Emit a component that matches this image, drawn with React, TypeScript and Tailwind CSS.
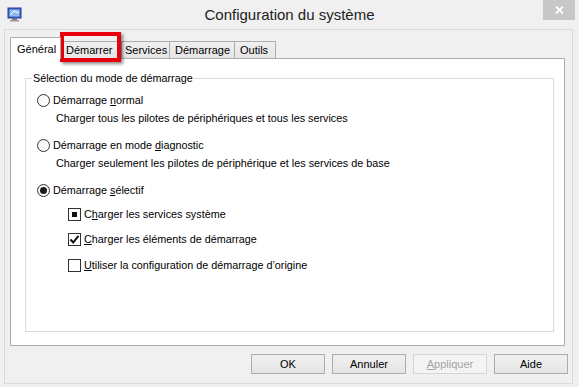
import React from "react";

const F = { fontFamily: '"Liberation Sans", Arial, sans-serif' };

function Radio({ checked }: { checked?: boolean }) {
  return (
    <span className="w-[13px] h-[13px] rounded-full border border-[#333333] bg-gradient-to-br from-[#f4f4f4] to-white flex items-center justify-center shrink-0">
      {checked && <span className="w-[7px] h-[7px] rounded-full bg-[#1a1a1a]" />}
    </span>
  );
}

function Check({ state }: { state: "none" | "check" | "ind" }) {
  return (
    <span className="w-[13px] h-[13px] border border-[#333333] bg-white flex items-center justify-center shrink-0">
      {state === "ind" && <span className="w-[5px] h-[5px] bg-[#111]" />}
      {state === "check" && (
        <svg width="11" height="11" viewBox="0 0 11 11">
          <path d="M1.5 5.5 L4.2 8.5 L9.5 1.8" fill="none" stroke="#111" strokeWidth="2" />
        </svg>
      )}
    </span>
  );
}

function Btn({ children, disabled }: { children: React.ReactNode; disabled?: boolean }) {
  return (
    <div
      className={
        "w-[74px] h-[20px] flex items-center justify-center text-[11px] border " +
        (disabled
          ? "border-[#d6d6d6] bg-[#f4f4f4] text-[#a3a3a3]"
          : "border-[#acacac] bg-gradient-to-b from-[#f0f0f0] to-[#e5e5e5] text-black")
      }
    >
      {children}
    </div>
  );
}

export default function App() {
  return (
    <div className="w-[579px] h-[387px] bg-[#f0f0f0] relative overflow-hidden text-black" style={F}>
      {/* Title bar */}
      <div className="h-[29px] flex items-center relative">
        <svg className="absolute left-[7px] top-[7px]" width="15" height="15" viewBox="0 0 15 15">
          <rect x="1" y="1" width="13" height="10" fill="#3a64c8" stroke="#1d3d8f" strokeWidth="1" />
          <rect x="2.5" y="2.5" width="10" height="7" fill="#8fb8f0" />
          <path d="M3 8 L7 4 L12 6" stroke="#ffffff" strokeWidth="1" fill="none" />
          <rect x="5" y="11" width="5" height="2" fill="#7a7a7a" />
          <rect x="3" y="13" width="9" height="1.5" fill="#9a9a9a" />
        </svg>
        <div className="flex-1 text-center text-[15px] text-[#222] pt-[1px]">Configuration du système</div>
        <div className="absolute top-0 right-[4px] w-[32px] h-[20px] bg-[#c7c7c7] flex items-center justify-center">
          <svg width="9" height="8" viewBox="0 0 9 8">
            <path d="M1 0.5 L8 7.5 M8 0.5 L1 7.5" stroke="#fff" strokeWidth="1.8" />
          </svg>
        </div>
      </div>

      {/* Client frame */}
      <div className="ml-[4px] w-[569px] h-[355px] border border-[#dadada] flex flex-col">
        {/* Tabs */}
        <div className="h-[28px] flex items-end pl-[5px] text-[11px]">
          <div className="h-[22px] w-[51px] bg-white border border-[#adadad] border-b-0 pl-[6px] pt-[3px] relative z-10 -mb-[1px]">
            Général
          </div>
          <div className="h-[17px] w-[60px] bg-gradient-to-b from-[#f0f0f0] to-[#e5e5e5] border border-[#acacac] border-b-0 border-l-0 pl-[5px] leading-[16px]">
            Démarrer
          </div>
          <div className="h-[17px] w-[49px] bg-gradient-to-b from-[#f0f0f0] to-[#e5e5e5] border border-[#acacac] border-b-0 pl-[3px] leading-[16px]">
            Services
          </div>
          <div className="h-[17px] w-[65px] bg-gradient-to-b from-[#f0f0f0] to-[#e5e5e5] border border-[#acacac] border-b-0 border-l-0 pl-[5px] leading-[16px]">
            Démarrage
          </div>
          <div className="h-[17px] w-[41px] bg-gradient-to-b from-[#f0f0f0] to-[#e5e5e5] border border-[#acacac] border-b-0 border-l-0 pl-[5px] leading-[16px]">
            Outils
          </div>
        </div>

        {/* Panel */}
        <div className="ml-[5px] w-[555px] h-[288px] bg-white border border-[#adadad] pt-[19px] pl-[14px] pr-[10px]">
          <div className="relative h-[254px] border border-[#dcdcdc] text-[10.8px]">
            <span className="absolute -top-[9px] left-[6px] bg-white px-[1px] leading-[16px]">
              Sélection du mode de démarrage
            </span>
            <div className="pl-[11px] pt-[15px] flex flex-col">
              <div className="h-[13px] flex items-center gap-[3px]">
                <Radio />
                <span>
                  Démarrage <u>n</u>ormal
                </span>
              </div>
              <div className="h-[13px] mt-[5px] pl-[19px] flex items-center">
                Charger tous les pilotes de périphériques et tous les services
              </div>
              <div className="h-[13px] mt-[14px] flex items-center gap-[3px]">
                <Radio />
                <span>
                  Démarrage en mode <u>d</u>iagnostic
                </span>
              </div>
              <div className="h-[13px] mt-[5px] pl-[19px] flex items-center">
                Charger seulement les pilotes de périphérique et les services de base
              </div>
              <div className="h-[13px] mt-[14px] flex items-center gap-[3px]">
                <Radio checked />
                <span>
                  Démarrage <u>s</u>électif
                </span>
              </div>
              <div className="h-[13px] mt-[11px] pl-[31px] flex items-center gap-[3px]">
                <Check state="ind" />
                <span>
                  C<u>h</u>arger les services système
                </span>
              </div>
              <div className="h-[13px] mt-[12px] pl-[31px] flex items-center gap-[3px]">
                <Check state="check" />
                <span>
                  <u>C</u>harger les éléments de démarrage
                </span>
              </div>
              <div className="h-[13px] mt-[13px] pl-[31px] flex items-center gap-[3px]">
                <Check state="none" />
                <span>
                  <u>U</u>tiliser la configuration de démarrage d’origine
                </span>
              </div>
            </div>
          </div>
        </div>

        {/* Buttons */}
        <div className="flex justify-end gap-[7px] pt-[8px] pr-[4px]">
          <Btn>OK</Btn>
          <Btn>Annuler</Btn>
          <Btn disabled>
            <u>A</u>ppliquer
          </Btn>
          <Btn>Aide</Btn>
        </div>
      </div>

      {/* Red highlight */}
      <div className="absolute left-[60px] top-[32px] w-[61px] h-[30px] border-[4px] border-[#e8000c] shadow-[2px_2px_3px_rgba(0,0,0,0.45)]" />
    </div>
  );
}
